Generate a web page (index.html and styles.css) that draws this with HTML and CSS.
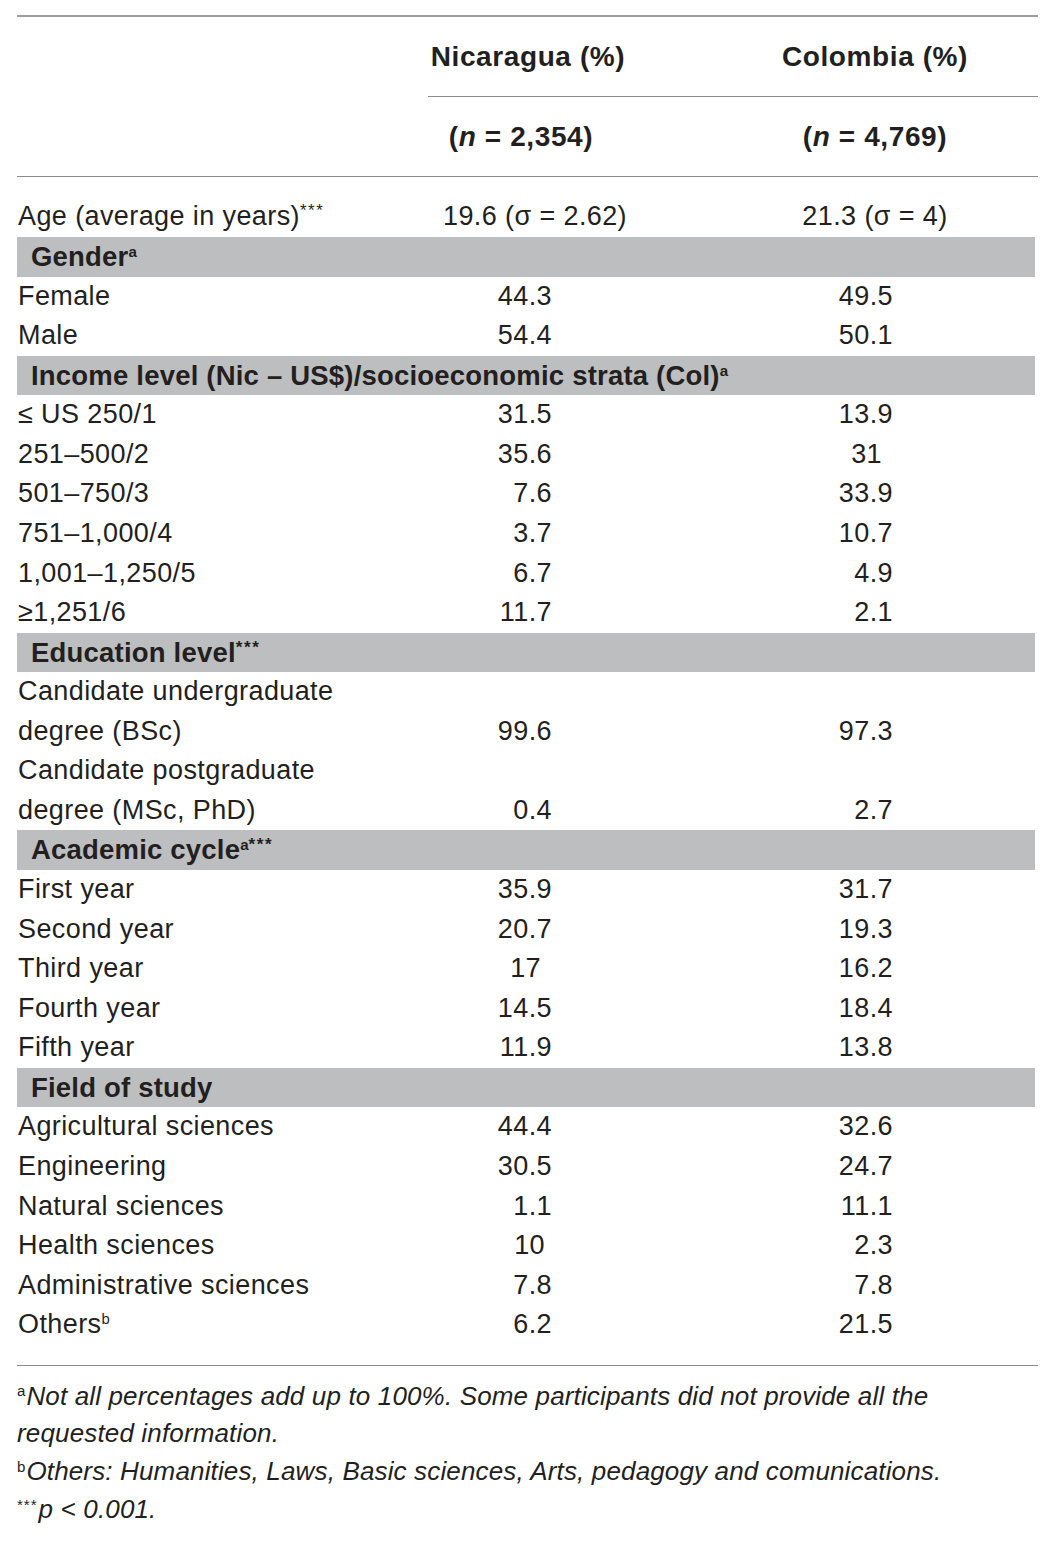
FILE: index.html
```html
<!DOCTYPE html>
<html lang="en">
<head>
<meta charset="utf-8">
<title>Table</title>
<link rel="stylesheet" href="styles.css">
</head>
<body>
<div class="table">
  <div class="rule-top"></div>
  <div class="head">
    <div class="hc"></div>
    <div class="hc c2"><span>Nicaragua (%)</span></div>
    <div class="hc c3"><span>Colombia (%)</span></div>
  </div>
  <div class="subrule"></div>
  <div class="head">
    <div class="hc"></div>
    <div class="hc c2n"><span>(<i>n</i> = 2,354)</span></div>
    <div class="hc c3"><span>(<i>n</i> = 4,769)</span></div>
  </div>
  <div class="rule"></div>

  <div class="row age">
    <div class="lab">Age (average in years)<sup class="st">***</sup></div>
    <div class="mid c2">19.6 (σ = 2.62)</div>
    <div class="mid c3">21.3 (σ = 4)</div>
  </div>

  <div class="row band"><div class="lab">Gender<sup class="sa">a</sup></div></div>
  <div class="row"><div class="lab">Female</div><div class="n2">44.3</div><div class="n3">49.5</div></div>
  <div class="row"><div class="lab">Male</div><div class="n2">54.4</div><div class="n3">50.1</div></div>

  <div class="row band"><div class="lab">Income level (Nic – US$)/socioeconomic strata (Col)<sup class="sa">a</sup></div></div>
  <div class="row"><div class="lab">≤ US 250/1</div><div class="n2">31.5</div><div class="n3">13.9</div></div>
  <div class="row"><div class="lab">251–500/2</div><div class="n2">35.6</div><div class="n3"><span class="int i11">31</span></div></div>
  <div class="row"><div class="lab">501–750/3</div><div class="n2">7.6</div><div class="n3">33.9</div></div>
  <div class="row"><div class="lab">751–1,000/4</div><div class="n2">3.7</div><div class="n3">10.7</div></div>
  <div class="row"><div class="lab">1,001–1,250/5</div><div class="n2">6.7</div><div class="n3">4.9</div></div>
  <div class="row"><div class="lab">≥1,251/6</div><div class="n2">11.7</div><div class="n3">2.1</div></div>

  <div class="row band"><div class="lab">Education level<sup class="st">***</sup></div></div>
  <div class="row"><div class="lab">Candidate undergraduate</div></div>
  <div class="row"><div class="lab">degree (BSc)</div><div class="n2">99.6</div><div class="n3">97.3</div></div>
  <div class="row"><div class="lab">Candidate postgraduate</div></div>
  <div class="row"><div class="lab">degree (MSc, PhD)</div><div class="n2">0.4</div><div class="n3">2.7</div></div>

  <div class="row band"><div class="lab">Academic cycle<sup class="sa">a</sup><sup class="st">***</sup></div></div>
  <div class="row"><div class="lab">First year</div><div class="n2">35.9</div><div class="n3">31.7</div></div>
  <div class="row"><div class="lab">Second year</div><div class="n2">20.7</div><div class="n3">19.3</div></div>
  <div class="row"><div class="lab">Third year</div><div class="n2"><span class="int i11">17</span></div><div class="n3">16.2</div></div>
  <div class="row"><div class="lab">Fourth year</div><div class="n2">14.5</div><div class="n3">18.4</div></div>
  <div class="row"><div class="lab">Fifth year</div><div class="n2">11.9</div><div class="n3">13.8</div></div>

  <div class="row band"><div class="lab">Field of study</div></div>
  <div class="row"><div class="lab">Agricultural sciences</div><div class="n2">44.4</div><div class="n3">32.6</div></div>
  <div class="row"><div class="lab">Engineering</div><div class="n2">30.5</div><div class="n3">24.7</div></div>
  <div class="row"><div class="lab">Natural sciences</div><div class="n2">1.1</div><div class="n3">11.1</div></div>
  <div class="row"><div class="lab">Health sciences</div><div class="n2"><span class="int i7">10</span></div><div class="n3">2.3</div></div>
  <div class="row"><div class="lab">Administrative sciences</div><div class="n2">7.8</div><div class="n3">7.8</div></div>
  <div class="row"><div class="lab">Others<sup class="sb">b</sup></div><div class="n2">6.2</div><div class="n3">21.5</div></div>

  <div class="foot">
    <p><sup class="fs">a</sup>Not all percentages add up to 100%. Some participants did not provide all the requested information.</p>
    <p><sup class="fs">b</sup>Others: Humanities, Laws, Basic sciences, Arts, pedagogy and comunications.</p>
    <p><sup class="fs fst">***</sup>p &lt; 0.001.</p>
  </div>
</div>
</body>
</html>
```
FILE: styles.css
```css
html, body {
  margin: 0;
  background: #ffffff;
}
body {
  padding-top: 15px;
  font-family: "Liberation Sans", Arial, Helvetica, sans-serif;
  color: #231f20;
}
.table {
  margin-left: 17px;
  width: 1021px;
}
.rule-top {
  border-top: 2px solid #9d9d9d;
}
.head {
  display: grid;
  grid-template-columns: 411px 200px 410px;
  height: 79px;
}
.hc {
  display: flex;
  align-items: center;
  justify-content: center;
  font-weight: bold;
  font-size: 28px;
  letter-spacing: 0.6px;
  white-space: nowrap;
}
.hc i { font-style: italic; }
.c2n { padding-right: 14px; }
.c3 { padding-left: 84px; }
.subrule {
  margin-left: 411px;
  border-top: 1px solid #8c8c8c;
}
.rule {
  border-top: 1px solid #8c8c8c;
}
.row {
  display: grid;
  grid-template-columns: 411px 200px 410px;
  height: 39.57px;
  line-height: 39.57px;
  font-size: 27px;
  letter-spacing: 0.4px;
  white-space: nowrap;
}
.row.age {
  height: 60px;
  align-items: end;
}
.lab { padding-left: 1px; }
.mid { text-align: center; }
.row .c2 { padding-left: 14px; }
.n2 { text-align: right; padding-right: 76px; }
.n3 { text-align: right; padding-right: 145px; }
.int { display: inline-block; }
.i11 { padding-right: 11px; }
.i7 { padding-right: 7px; }
.band {
  background: #bcbec0;
  width: 1018px;
  font-weight: bold;
  font-size: 27.5px;
  letter-spacing: 0.2px;
}
.band .lab { padding-left: 14px; }
sup {
  line-height: 0;
  vertical-align: 0.5em;
  font-size: 0.6em;
  letter-spacing: 0;
}
.st { font-size: 0.62em; vertical-align: 0.55em; letter-spacing: 1.6px; }
.sa { font-size: 0.55em; vertical-align: 0.6em; }
.sb { font-size: 0.55em; vertical-align: 0.6em; }
.foot {
  margin-top: 20px;
  border-top: 1px solid #8c8c8c;
  padding-top: 12px;
  width: 1021px;
}
.foot p {
  margin: 0;
  font-style: italic;
  font-size: 26px;
  line-height: 37.7px;
  width: 960px;
  letter-spacing: 0.15px;
}
.fs {
  font-style: normal;
  font-size: 0.58em;
  vertical-align: 0.55em;
  margin-right: 1px;
}
.fst { letter-spacing: 1px; }
```
